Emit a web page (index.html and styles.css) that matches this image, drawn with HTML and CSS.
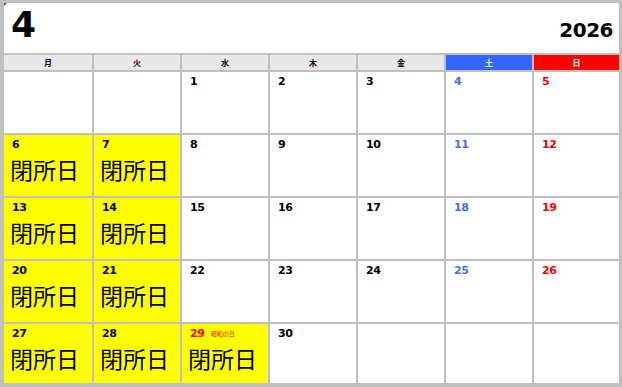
FILE: index.html
```html
<!DOCTYPE html>
<html lang="ja">
<head>
<meta charset="utf-8">
<link rel="stylesheet" href="styles.css">
</head>
<body>
<div class="cal">
  <div class="title">
    <span class="mark"></span>
    <span class="month">4</span>
    <span class="year">2026</span>
  </div>
  <div class="wd">月</div>
  <div class="wd">火</div>
  <div class="wd">水</div>
  <div class="wd">木</div>
  <div class="wd">金</div>
  <div class="wd sat">土</div>
  <div class="wd sun">日</div>

  <div class="day"></div>
  <div class="day"></div>
  <div class="day"><span class="num">1</span></div>
  <div class="day"><span class="num">2</span></div>
  <div class="day"><span class="num">3</span></div>
  <div class="day"><span class="num blue">4</span></div>
  <div class="day"><span class="num red">5</span></div>

  <div class="day closed"><span class="num">6</span><span class="note">閉所日</span></div>
  <div class="day closed"><span class="num">7</span><span class="note">閉所日</span></div>
  <div class="day"><span class="num">8</span></div>
  <div class="day"><span class="num">9</span></div>
  <div class="day"><span class="num">10</span></div>
  <div class="day"><span class="num blue">11</span></div>
  <div class="day"><span class="num red">12</span></div>

  <div class="day closed"><span class="num">13</span><span class="note">閉所日</span></div>
  <div class="day closed"><span class="num">14</span><span class="note">閉所日</span></div>
  <div class="day"><span class="num">15</span></div>
  <div class="day"><span class="num">16</span></div>
  <div class="day"><span class="num">17</span></div>
  <div class="day"><span class="num blue">18</span></div>
  <div class="day"><span class="num red">19</span></div>

  <div class="day closed"><span class="num">20</span><span class="note">閉所日</span></div>
  <div class="day closed"><span class="num">21</span><span class="note">閉所日</span></div>
  <div class="day"><span class="num">22</span></div>
  <div class="day"><span class="num">23</span></div>
  <div class="day"><span class="num">24</span></div>
  <div class="day"><span class="num blue">25</span></div>
  <div class="day"><span class="num red">26</span></div>

  <div class="day closed"><span class="num">27</span><span class="note">閉所日</span></div>
  <div class="day closed"><span class="num">28</span><span class="note">閉所日</span></div>
  <div class="day closed"><span class="num red">29<small class="hol">昭和の日</small></span><span class="note">閉所日</span></div>
  <div class="day"><span class="num">30</span></div>
  <div class="day"></div>
  <div class="day"></div>
  <div class="day"></div>
</div>
</body>
</html>
```

FILE: styles.css
```css
html, body {
  margin: 0;
  padding: 0;
  background: #ffffff;
}

.cal {
  box-sizing: border-box;
  width: 622px;
  height: 387px;
  display: grid;
  grid-template-columns: 88px repeat(5, 86px) 85px;
  grid-template-rows: 50px 15px 61px 61px 61px 61px 59px;
  gap: 2px;
  background: #c0c0c0;
  border-style: solid;
  border-color: #c0c0c0;
  border-width: 3px 3px 4px 4px;
  font-family: "DejaVu Sans", "Noto Sans CJK JP", sans-serif;
}

.title {
  grid-column: 1 / -1;
  background: #ffffff;
  display: flex;
  justify-content: space-between;
  align-items: flex-start;
  position: relative;
  color: #000;
}

.mark {
  position: absolute;
  left: 0;
  top: 0;
  width: 0;
  height: 0;
  border-top: 3px solid #1f7a1f;
  border-right: 3px solid transparent;
}

.month {
  font-weight: bold;
  font-size: 36px;
  line-height: 36px;
  margin: 4px 0 0 7px;
}

.year {
  font-weight: bold;
  font-size: 20px;
  line-height: 20px;
  margin: 17px 6px 0 0;
  letter-spacing: -0.5px;
}

.wd {
  background: #e8e8e8;
  font-family: "Noto Sans CJK JP", sans-serif;
  font-weight: bold;
  font-size: 8px;
  line-height: 15px;
  text-align: center;
  color: #000;
}

.wd.sat {
  background: #3366ff;
  color: #ffffff;
}

.wd.sun {
  background: #ff0000;
  color: #ffffff;
}

.day {
  background: #ffffff;
  display: flex;
  flex-direction: column;
  align-items: flex-start;
  padding: 3px 0 0 8px;
  box-sizing: border-box;
  overflow: hidden;
}

.day.closed {
  background: #ffff00;
  padding-left: 6px;
}

.day.closed .num {
  padding-left: 2px;
}

.num {
  font-weight: bold;
  font-size: 11px;
  line-height: 13px;
  color: #000;
  white-space: nowrap;
  letter-spacing: -0.3px;
}

.num.blue {
  color: #3d6ff2;
}

.num.red {
  color: #ff0000;
}

.hol {
  font-family: "Noto Sans CJK JP", sans-serif;
  font-size: 6px;
  font-weight: normal;
  margin-left: 6px;
  vertical-align: 1px;
  letter-spacing: 0;
}

.note {
  font-family: "Noto Sans CJK JP", sans-serif;
  font-size: 23px;
  line-height: normal;
  margin-top: 1px;
  color: #000;
}
```
